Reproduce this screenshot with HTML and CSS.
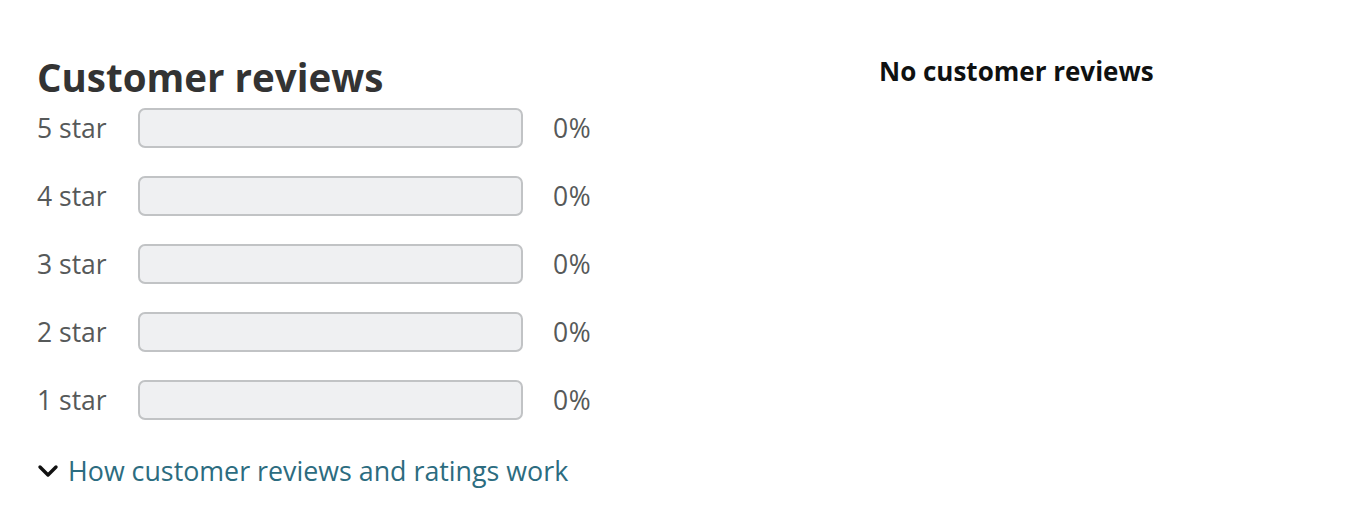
FILE: index.html
```html
<!DOCTYPE html>
<html>
<head>
<meta charset="utf-8">
<link rel="stylesheet" href="styles.css">
</head>
<body>
<div class="page">
  <section class="summary">
    <h2 class="title">Customer reviews</h2>
    <div class="hist">
      <div class="row"><span class="label">5 star</span><div class="bar"></div><span class="pct">0%</span></div>
      <div class="row"><span class="label">4 star</span><div class="bar"></div><span class="pct">0%</span></div>
      <div class="row"><span class="label">3 star</span><div class="bar"></div><span class="pct">0%</span></div>
      <div class="row"><span class="label">2 star</span><div class="bar"></div><span class="pct">0%</span></div>
      <div class="row"><span class="label">1 star</span><div class="bar"></div><span class="pct">0%</span></div>
    </div>
    <a class="how" href="#"><svg class="chev" viewBox="0 0 22 14" width="22" height="14"><path d="M3 3 L11 11 L19 3" fill="none" stroke="#111" stroke-width="3.4" stroke-linecap="round" stroke-linejoin="round"/></svg>How customer reviews and ratings work</a>
  </section>
  <section class="reviews">
    <h3 class="none">No customer reviews</h3>
  </section>
</div>
</body>
</html>
```
FILE: styles.css
```css
html, body { margin: 0; padding: 0; background: #fff; }
body { font-family: "Open Sans", "Noto Sans", sans-serif; color: #0f1111; }
.page { display: flex; padding: 0 0 0 37px; }
.summary { width: 600px; display: flex; flex-direction: column; }
.title { margin: 53px 0 0 0; font-size: 38.5px; font-weight: 700; line-height: 48px; color: #333; }
.hist { display: flex; flex-direction: column; gap: 28px; margin-top: 7px; }
.row { display: flex; align-items: center; height: 40px; }
.label { width: 101px; font-size: 26.5px; color: #565959; }
.bar { box-sizing: border-box; width: 385px; height: 40px; border: 2px solid #c1c3c5; border-radius: 7px; background: #eff0f2; }
.pct { margin-left: 30px; font-size: 26.5px; color: #565959; letter-spacing: 0.5px; }
.how { display: flex; align-items: center; margin-top: 32px; font-size: 26.8px; color: #2c6c80; text-decoration: none; }
.chev { margin-right: 9px; }
.reviews { padding-left: 242px; }
.none { margin: 53px 0 0 0; font-size: 26px; font-weight: 700; line-height: 36px; color: #0f1111; }
```
